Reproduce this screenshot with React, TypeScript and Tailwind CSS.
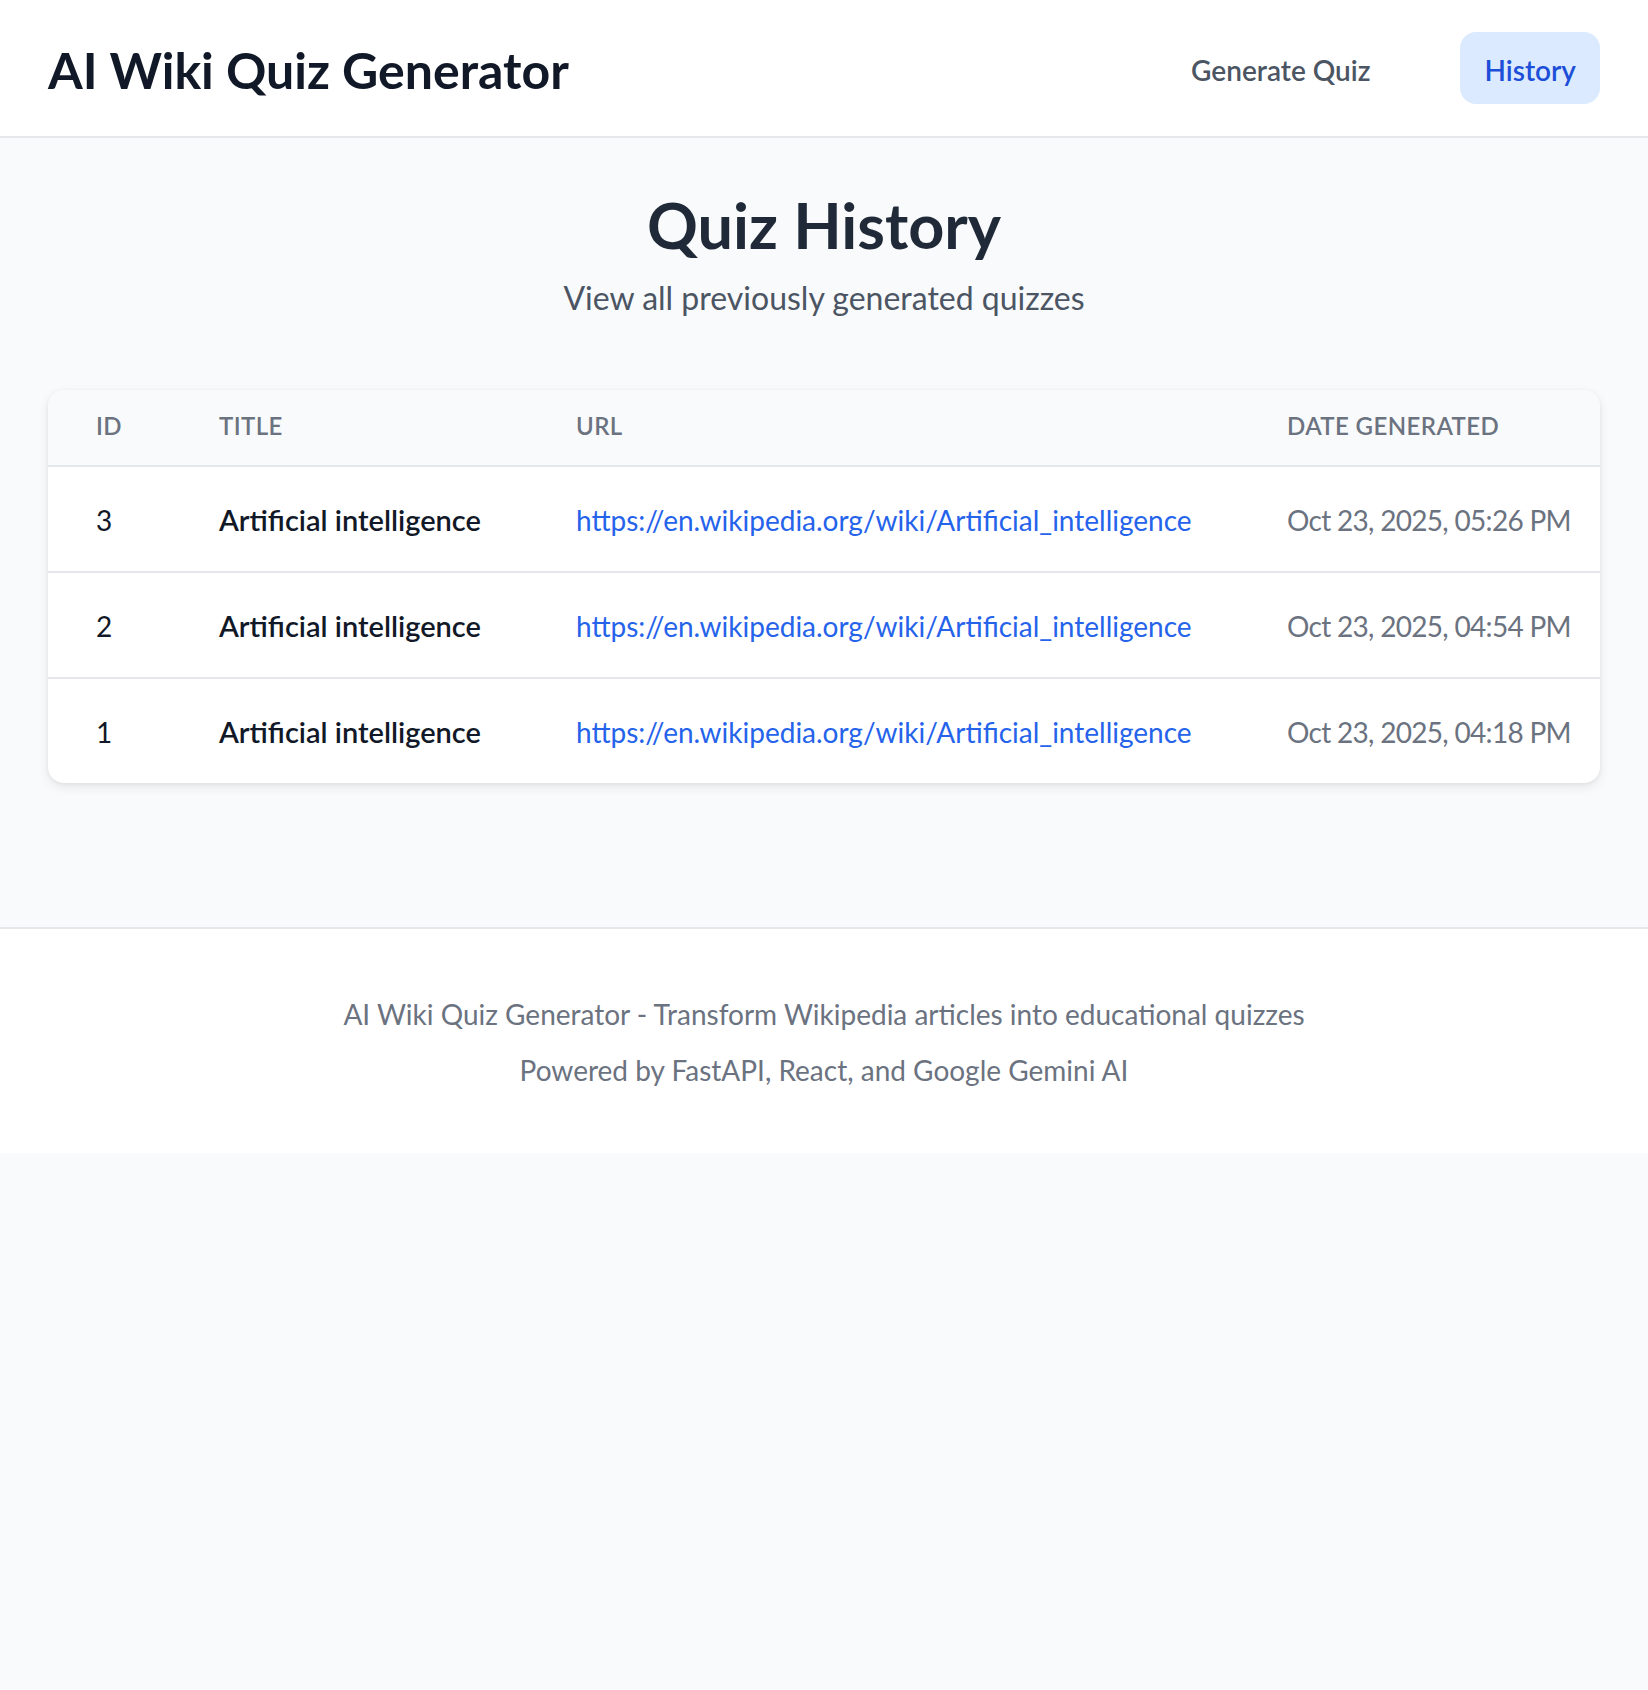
import React from "react";

type QuizRow = {
  id: number;
  title: string;
  url: string;
  date: string;
};

// 최근 생성 순
const QUIZZES: QuizRow[] = [
  { id: 3, title: "Artificial intelligence", url: "https://en.wikipedia.org/wiki/Artificial_intelligence", date: "Oct 23, 2025, 05:26 PM" },
  { id: 2, title: "Artificial intelligence", url: "https://en.wikipedia.org/wiki/Artificial_intelligence", date: "Oct 23, 2025, 04:54 PM" },
  { id: 1, title: "Artificial intelligence", url: "https://en.wikipedia.org/wiki/Artificial_intelligence", date: "Oct 23, 2025, 04:18 PM" },
];

function Header() {
  return (
    <header className="bg-white border-b-2 border-[#e5e7eb]">
      <div className="h-[136px] px-12 flex items-center justify-between">
        <h1 className="pt-[4px] text-[50px] leading-[64px] font-bold text-[#111827]">AI Wiki Quiz Generator</h1>
        <nav className="flex items-center gap-[66px]">
          <button className="px-6 pt-[18px] pb-[14px] rounded-2xl text-[28px] leading-[40px] font-semibold text-[#4b5563]">
            Generate Quiz
          </button>
          <button className="px-6 pt-[18px] pb-[14px] rounded-2xl text-[28px] leading-[40px] font-semibold bg-[#dbeafe] text-[#1d4ed8]">
            History
          </button>
        </nav>
      </div>
    </header>
  );
}

function HistoryTable() {
  return (
    <div className="bg-white rounded-2xl shadow-[0_4px_12px_rgba(0,0,0,0.08),0_1px_4px_rgba(0,0,0,0.06)] overflow-hidden">
      <table className="w-[1570px] table-fixed text-left">
        <thead className="bg-[#f9fafb] border-b-2 border-[#e5e7eb]">
          <tr className="text-[24px] leading-[32px] font-semibold uppercase tracking-[0.4px] text-[#6b7280]">
            <th className="w-[123px] px-12 pt-[20px] pb-[23px] font-semibold">ID</th>
            <th className="w-[357px] px-12 pt-[20px] pb-[23px] font-semibold">Title</th>
            <th className="w-[711px] px-12 pt-[20px] pb-[23px] font-semibold">URL</th>
            <th className="w-[379px] px-12 pt-[20px] pb-[23px] font-semibold">Date Generated</th>
          </tr>
        </thead>
        <tbody className="divide-y-2 divide-[#e5e7eb]">
          {QUIZZES.map((q) => (
            <tr key={q.id} className="text-[28px] leading-[40px] whitespace-nowrap">
              <td className="px-12 pt-[33px] pb-[31px] text-[#111827]">{q.id}</td>
              <td className="px-12 pt-[33px] pb-[31px] text-[29px] font-semibold text-[#111827]">{q.title}</td>
              <td className="px-12 pt-[33px] pb-[31px]">
                <a href={q.url} className="text-[#2563eb]">{q.url}</a>
              </td>
              <td className="px-12 pt-[33px] pb-[31px] tracking-[-0.7px] text-[#6b7280]">{q.date}</td>
            </tr>
          ))}
        </tbody>
      </table>
    </div>
  );
}

export default function App() {
  return (
    <div className="min-h-screen bg-[#f9fafb] font-['Lato',sans-serif]">
      <Header />

      <main className="px-12 pt-[51px] pb-[144px]">
        <div className="text-center">
          <h2 className="text-[63px] leading-[72px] font-bold text-[#1f2937]">Quiz History</h2>
          <p className="mt-[13px] text-[32px] leading-[48px] text-[#4b5563]">View all previously generated quizzes</p>
        </div>

        <div className="mt-[68px]">
          <HistoryTable />
        </div>
      </main>

      <footer className="bg-white border-t-2 border-[#e5e7eb]">
        <div className="pt-[65px] pb-[63px] text-center text-[28px] leading-[40px] text-[#6b7280]">
          <p>AI Wiki Quiz Generator - Transform Wikipedia articles into educational quizzes</p>
          <p className="mt-4">Powered by FastAPI, React, and Google Gemini AI</p>
        </div>
      </footer>
    </div>
  );
}
